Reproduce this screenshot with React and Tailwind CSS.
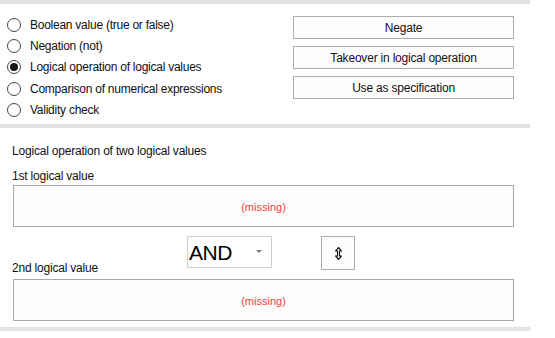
import { useState } from 'react';

const OPTIONS = [
  'Boolean value (true or false)',
  'Negation (not)',
  'Logical operation of logical values',
  'Comparison of numerical expressions',
  'Validity check',
];

function Radio({ label, checked, onClick }) {
  return (
    <div className="flex items-center h-[21.3px] cursor-default" onClick={onClick}>
      <span className="w-[14px] h-[14px] rounded-full border border-[#444] bg-white flex items-center justify-center">
        {checked && <span className="w-[8px] h-[8px] rounded-full bg-[#1a1a1a]" />}
      </span>
      <span className="ml-[9px] text-[12px] text-[#111] tracking-[-0.25px]">{label}</span>
    </div>
  );
}

function Button({ children }) {
  return (
    <button className="w-[221px] h-[23px] border border-[#adadad] bg-[#fdfdfd] text-[12px] text-[#111] tracking-[-0.2px] flex items-center justify-center">
      {children}
    </button>
  );
}

function ValueBox() {
  return (
    <div className="w-[501px] h-[42px] ml-[13px] border border-[#a8a8a8] bg-[#fcfcfc] flex items-center justify-center">
      <span className="text-[11px] text-[#f0443a] mt-[2px]">(missing)</span>
    </div>
  );
}

export default function App() {
  const [mode, setMode] = useState(2);

  return (
    <div className="w-[555px] h-[338px] bg-white font-['Liberation_Sans',Arial,sans-serif] overflow-hidden">
      <div className="w-[530px] h-[4px] bg-[#e3e3e3]" />

      <div className="flex w-[530px] h-[120px]">
        <div className="flex flex-col pl-[7px] pt-[10px]">
          {OPTIONS.map((o, i) => (
            <Radio key={o} label={o} checked={mode === i} onClick={() => setMode(i)} />
          ))}
        </div>
        <div className="ml-auto mr-[16px] pt-[12px] flex flex-col gap-[7px]">
          <Button>Negate</Button>
          <Button>Takeover in logical operation</Button>
          <Button>Use as specification</Button>
        </div>
      </div>

      <div className="w-[530px] h-[4px] bg-[#e3e3e3]" />

      <div className="pt-[16px] pl-[12px] text-[12px] text-[#111] leading-[14px] tracking-[-0.2px]">
        Logical operation of two logical values
      </div>
      <div className="pt-[11px] pl-[12px] text-[12px] text-[#111] leading-[14px] tracking-[-0.2px]">1st logical value</div>
      <div className="mt-[2px]">
        <ValueBox />
      </div>

      <div className="relative h-[52px]">
        <div className="absolute left-[12px] bottom-[4px] text-[12px] text-[#111] leading-[14px] tracking-[-0.2px]">2nd logical value</div>
        <div className="absolute left-[187px] top-[9px] w-[85px] h-[32px] border border-[#d0d0d0] bg-white flex items-center">
          <span className="ml-[1px] text-[21px] text-black leading-none tracking-[-0.5px]">AND</span>
          <svg className="ml-auto mr-[9px]" width="6" height="4" viewBox="0 0 6 4">
            <path d="M0 0 L6 0 L3 3 Z" fill="#7a7a7a" />
          </svg>
        </div>
        <div className="absolute left-[321px] top-[9px] w-[34px] h-[34px] border border-[#adadad] bg-[#fdfdfd] flex items-center justify-center">
          <svg width="7" height="13" viewBox="0 0 7 13">
            <path d="M3.5 0.5 L6.5 4 L4.5 4 L4.5 9 L6.5 9 L3.5 12.5 L0.5 9 L2.5 9 L2.5 4 L0.5 4 Z" fill="none" stroke="#1a1a1a" strokeWidth="1.2" />
          </svg>
        </div>
      </div>

      <ValueBox />

      <div className="mt-[6px] w-[530px] h-[4px] bg-[#e3e3e3]" />
    </div>
  );
}
